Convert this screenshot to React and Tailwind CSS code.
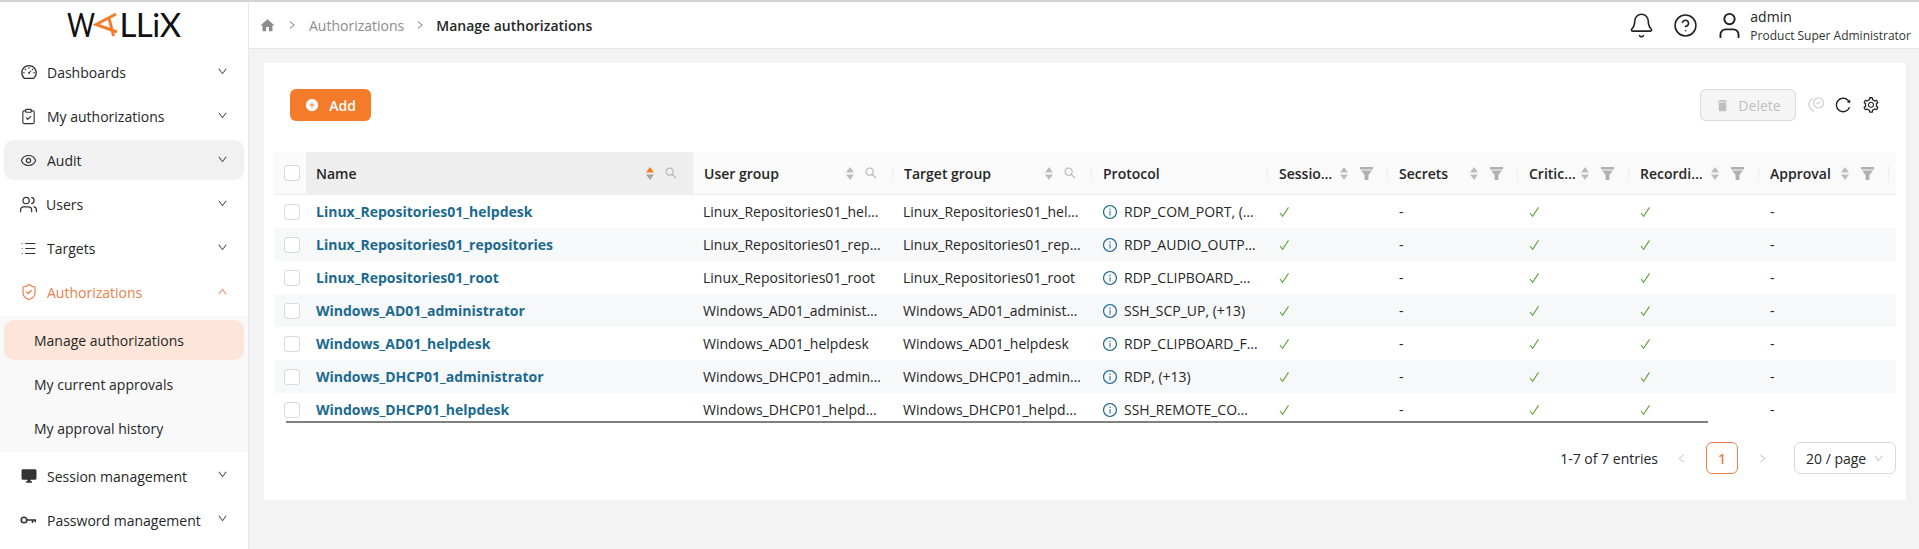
import {
  AiFillPlusCircle,
  AiOutlineDashboard,
  AiOutlineDown,
  AiOutlineInfoCircle,
  AiOutlineLeft,
  AiOutlineReload,
  AiOutlineRight,
  AiOutlineSearch,
  AiOutlineSetting,
  AiOutlineUp,
} from 'react-icons/ai';
import { MdDelete, MdDesktopWindows, MdHome } from 'react-icons/md';
import { Bell, CircleHelp, ClipboardCheck, Eye, List, ShieldCheck, User, Users } from 'lucide-react';

const NAV_TOP = [
  { label: 'Dashboards', icon: AiOutlineDashboard, cls: 'w-[18px] h-[18px] mr-[9px]' },
  { label: 'My authorizations', icon: ClipboardCheck, cls: 'w-[17px] h-[17px] mr-[10px]' },
  { label: 'Audit', icon: Eye, hover: true, cls: 'w-[17px] h-[17px] mr-[10px]' },
  { label: 'Users', icon: Users, cls: 'w-[19px] h-[19px] mr-[8px] -ml-[1px]' },
  { label: 'Targets', icon: List, cls: 'w-[17px] h-[17px] mr-[10px]' },
];

const NAV_SUB = [
  { label: 'Manage authorizations', active: true },
  { label: 'My current approvals' },
  { label: 'My approval history' },
];

const ROWS = [
  { name: 'Linux_Repositories01_helpdesk', protocol: 'RDP_COM_PORT, (+13)' },
  { name: 'Linux_Repositories01_repositories', protocol: 'RDP_AUDIO_OUTPUT, (+13)' },
  { name: 'Linux_Repositories01_root', protocol: 'RDP_CLIPBOARD_UP, (+13)' },
  { name: 'Windows_AD01_administrator', protocol: 'SSH_SCP_UP, (+13)' },
  { name: 'Windows_AD01_helpdesk', protocol: 'RDP_CLIPBOARD_FILE, (+13)' },
  { name: 'Windows_DHCP01_administrator', protocol: 'RDP, (+13)' },
  { name: 'Windows_DHCP01_helpdesk', protocol: 'SSH_REMOTE_COMMAND, (+13)' },
];

const GRID = 'grid grid-cols-[32px_387px_200px_199px_176px_120px_130px_111px_130px_130px_7px]';

function KeyIcon() {
  return (
    <svg width="17" height="17" viewBox="0 0 17 17" fill="none" stroke="#333" strokeWidth="1.6" className="mr-[10px]">
      <circle cx="4" cy="8" r="2.8" />
      <path d="M7 8 H16 M12.5 8 V11 M15.2 8 V10.2" />
    </svg>
  );
}

function Sort({ active }) {
  return (
    <svg width="8" height="13" viewBox="0 0 8 13" className="shrink-0">
      <path d="M4 0 L8 5.5 H0 Z" fill={active ? '#f47b2a' : '#bdbdbd'} />
      <path d="M0 7.5 H8 L4 13 Z" fill={active ? '#a6a6a6' : '#bdbdbd'} />
    </svg>
  );
}

function Funnel() {
  return (
    <svg width="13" height="13" viewBox="0 0 13 13" className="shrink-0">
      <path d="M0 0 H13 V2.6 H0 Z M1 3.6 H12 L8.4 8 V13 H4.6 V8 Z" fill="#b0b0b0" />
    </svg>
  );
}

function HeadCell({ label, active, tool }) {
  return (
    <div className={`relative flex items-center pr-[15px] font-semibold text-[#262626] ${active ? 'bg-[#eeeeee] pl-[10px]' : 'pl-[11px]'}`}>
      <span className="truncate flex-1 min-w-0 pr-[3px]">{label}</span>
      {tool === 'search' && (
        <span className="flex items-center gap-[10px] shrink-0">
          <Sort active={active} />
          <AiOutlineSearch className="w-[14px] h-[14px] text-[#b3b3b3]" />
        </span>
      )}
      {tool === 'filter' && (
        <span className="flex items-center gap-[12px] shrink-0">
          <Sort />
          <Funnel />
        </span>
      )}
      <span className="absolute right-0 top-[13px] h-[17px] w-px bg-[#eeeeee]" />
    </div>
  );
}

function Checkbox() {
  return <span className="block w-4 h-4 rounded-[3px] border border-[#d9d9d9] bg-white" />;
}

function YesCell() {
  return (
    <div className="flex items-center pl-[11px]">
      <svg width="11" height="12" viewBox="0 0 11 12" fill="none" stroke="#5ea33c" strokeWidth="1.1">
        <path d="M1 7 L3.6 10.4 L9.5 1.4" />
      </svg>
    </div>
  );
}

function NoCell() {
  return <div className="flex items-center pl-[11px]">-</div>;
}

export default function App() {
  return (
    <div className="flex flex-col w-[1919px] h-[549px] overflow-hidden bg-[#f3f3f3] text-[14px] text-[#262626] font-['Open_Sans',sans-serif]">
      <div className="h-[2px] bg-[#d4d4d4] shrink-0" />
      <div className="flex flex-1 min-h-0">
        {/* Sidebar */}
        <aside className="w-[249px] shrink-0 bg-white border-r border-[#e8e8e8] flex flex-col">
          <div className="h-[47px] flex items-center justify-center pb-[3px] text-[#111] text-[33px] leading-none font-['Lato',sans-serif]">
            <span className="inline-block w-[27px] scale-x-[0.82] origin-left">W</span>
            <svg width="25" height="25" viewBox="0 0 25 25" className="-ml-[1px]">
              <path d="M23 2 L3 12.5 L24 20" fill="none" stroke="#f47b2a" strokeWidth="3" />
              <path d="M16 6 L20.5 24" fill="none" stroke="#f47b2a" strokeWidth="3" />
            </svg>
            <span className="ml-[1px] tracking-[-0.5px]">LLiX</span>
          </div>
          <nav className="pt-[1px] flex flex-col">
            {NAV_TOP.map((n) => (
              <div key={n.label} className="h-[44px] px-[4px] flex items-center">
                <div className={`h-[40px] w-[240px] rounded-[10px] pl-[16px] pr-[16px] flex items-center ${n.hover ? 'bg-[#f1f1f1]' : ''}`}>
                  <n.icon className={`${n.cls} text-[#333]`} strokeWidth={1.6} />
                  <span className="flex-1">{n.label}</span>
                  <AiOutlineDown className="w-[11px] h-[11px] text-[#444] -mt-[2px]" />
                </div>
              </div>
            ))}
            <div className="h-[46px] px-[4px] pb-[2px] flex items-center text-[#e8804a]">
              <div className="h-[40px] w-[240px] pl-[16px] pr-[16px] flex items-center">
                <ShieldCheck className="w-[18px] h-[18px] mr-[9px]" strokeWidth={1.6} />
                <span className="flex-1">Authorizations</span>
                <AiOutlineUp className="w-[11px] h-[11px] -mt-[2px]" />
              </div>
            </div>
            <div className="bg-[#f9f9f9] pt-[4px]">
              {NAV_SUB.map((n) => (
                <div key={n.label} className="h-[44px] px-[4px]">
                  <div className={`h-[40px] w-[240px] rounded-[10px] pl-[30px] flex items-center ${n.active ? 'bg-[#fde6d9]' : ''}`}>
                    {n.label}
                  </div>
                </div>
              ))}
            </div>
            <div className="mt-[2px]">
              <div className="h-[44px] px-[4px] flex items-center">
                <div className="h-[40px] w-[240px] pl-[16px] pr-[16px] flex items-center">
                  <MdDesktopWindows className="w-[18px] h-[18px] mr-[9px] text-[#333]" />
                  <span className="flex-1">Session management</span>
                  <AiOutlineDown className="w-[11px] h-[11px] text-[#444] -mt-[4px]" />
                </div>
              </div>
              <div className="h-[44px] px-[4px] flex items-center">
                <div className="h-[40px] w-[240px] pl-[16px] pr-[16px] flex items-center">
                  <KeyIcon />
                  <span className="flex-1">Password management</span>
                  <AiOutlineDown className="w-[11px] h-[11px] text-[#444] -mt-[4px]" />
                </div>
              </div>
            </div>
          </nav>
        </aside>

        <div className="flex-1 min-w-0 flex flex-col">
          {/* Top bar */}
          <header className="h-[47px] shrink-0 bg-white border-b border-[#e8e8e8] flex items-center pl-[10px] pr-[8px]">
            <MdHome className="w-[17px] h-[17px] text-[#8c8c8c]" />
            <AiOutlineRight className="w-[10px] h-[10px] text-[#777] ml-[11px] mr-[12px]" />
            <span className="text-[#8c8c8c]">Authorizations</span>
            <AiOutlineRight className="w-[10px] h-[10px] text-[#777] ml-[11px] mr-[11px]" />
            <span className="font-semibold">Manage authorizations</span>
            <div className="flex-1" />
            <Bell className="w-[27px] h-[27px] text-[#222] mr-[18px]" strokeWidth={1.4} />
            <CircleHelp className="w-[25px] h-[25px] text-[#222] mr-[16px]" strokeWidth={1.5} />
            <User className="w-[31px] h-[31px] text-[#222] mr-[5px]" strokeWidth={1.5} />
            <div className="flex flex-col">
              <span className="text-[14px] leading-[19px] font-medium">admin</span>
              <span className="text-[12px] leading-[17px] mt-[1px] text-[#333] font-medium">Product Super Administrator</span>
            </div>
          </header>

          {/* Content */}
          <main className="pt-[14px] pl-[15px] pr-[13px]">
            <div className="bg-white h-[437px] pt-[26px] px-[10px]">
              <div className="flex items-center h-[32px] pl-[16px] pr-[16px]">
                <button className="h-[32px] w-[81px] rounded-[6px] bg-[#f47b2a] text-white font-semibold flex items-center justify-center gap-[10px]">
                  <AiFillPlusCircle className="w-[14px] h-[14px]" />
                  Add
                </button>
                <div className="flex-1" />
                <button className="h-[32px] w-[96px] rounded-[6px] bg-[#f5f5f5] border border-[#d9d9d9] text-[#bfbfbf] flex items-center justify-center gap-[8px]">
                  <MdDelete className="w-[15px] h-[15px]" />
                  Delete
                </button>
                <svg width="18" height="18" viewBox="0 0 18 18" fill="none" stroke="#d0d0d0" strokeWidth="1.2" className="ml-[11px]">
                  <path d="M6.5 2.5 A6 6 0 0 0 3.5 12.5 L7 15.5" />
                  <circle cx="11.5" cy="7" r="5" />
                  <path d="M8.8 8 L14 6" />
                </svg>
                <AiOutlineReload className="w-[18px] h-[18px] text-[#222] ml-[9px]" />
                <AiOutlineSetting className="w-[18px] h-[18px] text-[#222] ml-[10px]" />
              </div>

              {/* Table */}
              <div className="relative mt-[31px] h-[273px] overflow-hidden">
                <div className={`${GRID} h-[43px] bg-[#fafafa] border-b border-[#eeeeee]`}>
                  <div className="flex items-center pl-[10px]"><Checkbox /></div>
                  <HeadCell label="Name" active tool="search" />
                  <HeadCell label="User group" tool="search" />
                  <HeadCell label="Target group" tool="search" />
                  <HeadCell label="Protocol" />
                  <HeadCell label="Session probe" tool="filter" />
                  <HeadCell label="Secrets" tool="filter" />
                  <HeadCell label="Critical rules" tool="filter" />
                  <HeadCell label="Recording required" tool="filter" />
                  <HeadCell label="Approval" tool="filter" />
                  <div />
                </div>
                {ROWS.map((r, i) => (
                  <div key={r.name} className={`${GRID} h-[33px] ${i % 2 ? 'bg-[#f7f8f9]' : 'bg-white'}`}>
                    <div className="flex items-center pl-[10px]"><Checkbox /></div>
                    <div className="flex items-center pl-[10px] font-bold text-[#1b6a8e]">{r.name}</div>
                    <div className="flex items-center pl-[10px] pr-[12px] min-w-0"><span className="truncate">{r.name}</span></div>
                    <div className="flex items-center pl-[10px] pr-[9px] min-w-0"><span className="truncate">{r.name}</span></div>
                    <div className="flex items-center pl-[10px] pr-[9px] min-w-0">
                      <AiOutlineInfoCircle className="w-[16px] h-[16px] text-[#1b6a8e] shrink-0 mr-[6px]" />
                      <span className="truncate">{r.protocol}</span>
                    </div>
                    <YesCell />
                    <NoCell />
                    <YesCell />
                    <YesCell />
                    <NoCell />
                    <div />
                  </div>
                ))}
                <div className="absolute left-[12px] top-[269px] w-[1422px] h-[2px] bg-[#808080]" />
              </div>

              {/* Pagination */}
              <div className="flex items-center h-[32px] mt-[17px] justify-end">
                <span className="mr-[18px]">1-7 of 7 entries</span>
                <AiOutlineLeft className="w-[11px] h-[11px] text-[#c4c4c4] mr-[19px]" />
                <span className="w-[32px] h-[32px] rounded-[6px] border border-[#e8804a] text-[#e8804a] font-semibold flex items-center justify-center">1</span>
                <AiOutlineRight className="w-[11px] h-[11px] text-[#c4c4c4] ml-[19px] mr-[26px]" />
                <div className="w-[102px] h-[32px] rounded-[6px] border border-[#d9d9d9] flex items-center pl-[11px] pr-[11px]">
                  <span className="flex-1">20 / page</span>
                  <AiOutlineDown className="w-[11px] h-[11px] text-[#c4c4c4]" />
                </div>
              </div>
            </div>
          </main>
        </div>
      </div>
    </div>
  );
}
